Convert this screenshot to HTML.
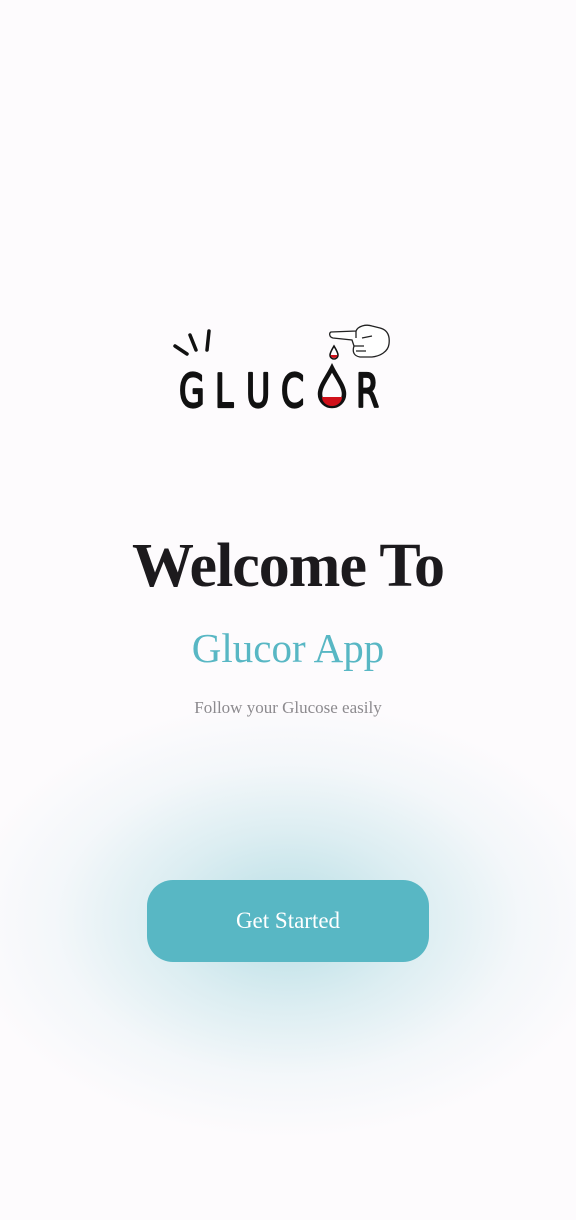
<!DOCTYPE html>
<html><head><meta charset="utf-8"><style>
html,body{margin:0;padding:0;}
body{width:576px;height:1220px;background:#fdfbfd;position:relative;overflow:hidden;font-family:"Liberation Serif",serif;}
.glow{position:absolute;left:-40px;top:700px;width:656px;height:440px;border-radius:50%;background:radial-gradient(ellipse at center,rgba(88,183,196,0.42) 0%,rgba(88,183,196,0.2) 28%,rgba(88,183,196,0.06) 50%,rgba(253,251,253,0) 70%);}
h1{position:absolute;top:528px;left:0;width:576px;margin:0;text-align:center;font-size:62px;font-weight:bold;color:#1c1a1d;letter-spacing:-1px;line-height:76px;}
h2{position:absolute;top:624px;left:0;width:576px;margin:0;text-align:center;font-size:41px;font-weight:normal;color:#58b7c4;line-height:48px;}
.sub{position:absolute;top:696px;left:0;width:576px;text-align:center;font-size:17px;color:#8c8a8e;line-height:24px;}
.btn{position:absolute;left:147px;top:880px;width:282px;height:82px;border-radius:26px;background:#58b7c4;color:#fff;font-size:23px;text-align:center;line-height:82px;}
svg{position:absolute;left:0;top:0;}
</style></head><body>
<div class="glow"></div>
<svg width="576" height="440" viewBox="0 0 576 440">
  <g stroke="#111" stroke-width="3.5" stroke-linecap="round" fill="none">
    <line x1="175" y1="346" x2="187" y2="354"/>
    <line x1="190" y1="335" x2="196" y2="350"/>
    <line x1="209" y1="331" x2="207" y2="350"/>
  </g>
  <g font-family="DejaVu Sans, sans-serif" font-size="46" fill="#111" stroke="#111" stroke-width="2.2" stroke-linejoin="round">
    <text transform="translate(179,407) scale(0.72,1)">G</text>
    <text transform="translate(215,407) scale(0.72,1)">L</text>
    <text transform="translate(246,407) scale(0.72,1)">U</text>
    <text transform="translate(281,407) scale(0.72,1)">C</text>
    <text transform="translate(356,407) scale(0.72,1)">R</text>
  </g>
  <path d="M332 368 C327 378 320 386 320 394 A12 12 0 0 0 344 394 C344 386 337 378 332 368 Z" fill="none" stroke="#111" stroke-width="4.5"/>
  <path d="M322 397 A10 9 0 0 0 342 397 Z" fill="#d0101a"/>
  <path d="M334 346 C331 351 330 353 330 355 A4 4 0 0 0 338 355 C338 353 337 351 334 346 Z" fill="none" stroke="#111" stroke-width="1.6"/>
  <path d="M330.5 355 A3.5 3 0 0 0 337.5 355 Z" fill="#d0101a"/>
  <g stroke="#222" stroke-width="1.3" fill="#fff">
    <path d="M331 332 L356 331 C358 326 366 324 372 326 L380 328 C388 330 390 336 389 344 C388 352 380 356 372 357 L360 357 C354 356 352 352 354 346 L352 340 L333 338 C329 337 329 333 331 332 Z"/>
    <path d="M356 331 L356 338 M354 346 L364 346 M356 351 L366 351 M362 338 L372 336"/>
  </g>
</svg>
<h1>Welcome To</h1>
<h2>Glucor App</h2>
<div class="sub">Follow your Glucose easily</div>
<div class="btn">Get Started</div>
</body></html>
